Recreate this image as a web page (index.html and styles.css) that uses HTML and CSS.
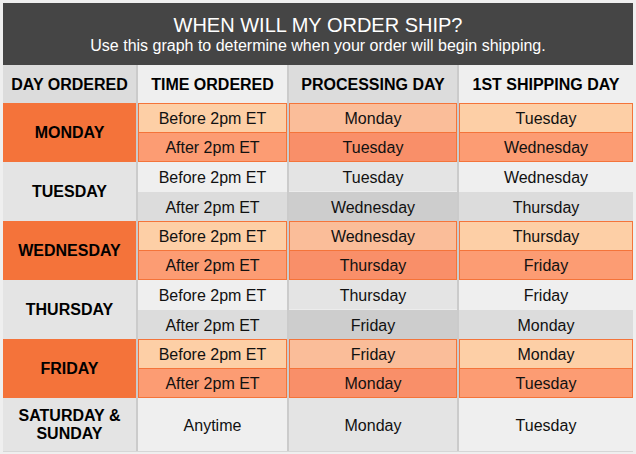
FILE: index.html
```html
<!DOCTYPE html>
<html lang="en">
<head>
<meta charset="utf-8">
<title>When will my order ship?</title>
<link rel="stylesheet" href="styles.css">
</head>
<body>
<div class="chart">
  <header class="banner">
    <h1 class="title">WHEN WILL MY ORDER SHIP?</h1>
    <p class="subtitle">Use this graph to determine when your order will begin shipping.</p>
  </header>
  <div class="grid">
    <div class="th th-dark">DAY ORDERED</div>
    <div class="th th-light">TIME ORDERED</div>
    <div class="th th-dark">PROCESSING DAY</div>
    <div class="th th-light">1ST SHIPPING DAY</div>

    <div class="day day-orange">MONDAY</div>
    <div class="cell o-before-a">Before 2pm ET</div>
    <div class="cell o-before-b">Monday</div>
    <div class="cell o-before-a">Tuesday</div>
    <div class="cell o-after-a after">After 2pm ET</div>
    <div class="cell o-after-b after">Tuesday</div>
    <div class="cell o-after-a after">Wednesday</div>

    <div class="day day-gray">TUESDAY</div>
    <div class="cell g-before-a">Before 2pm ET</div>
    <div class="cell g-before-b">Tuesday</div>
    <div class="cell g-before-a">Wednesday</div>
    <div class="cell g-after-a">After 2pm ET</div>
    <div class="cell g-after-b">Wednesday</div>
    <div class="cell g-after-a">Thursday</div>

    <div class="day day-orange">WEDNESDAY</div>
    <div class="cell o-before-a">Before 2pm ET</div>
    <div class="cell o-before-b">Wednesday</div>
    <div class="cell o-before-a">Thursday</div>
    <div class="cell o-after-a after">After 2pm ET</div>
    <div class="cell o-after-b after">Thursday</div>
    <div class="cell o-after-a after">Friday</div>

    <div class="day day-gray">THURSDAY</div>
    <div class="cell g-before-a">Before 2pm ET</div>
    <div class="cell g-before-b">Thursday</div>
    <div class="cell g-before-a">Friday</div>
    <div class="cell g-after-a">After 2pm ET</div>
    <div class="cell g-after-b">Friday</div>
    <div class="cell g-after-a">Monday</div>

    <div class="day day-orange">FRIDAY</div>
    <div class="cell o-before-a">Before 2pm ET</div>
    <div class="cell o-before-b">Friday</div>
    <div class="cell o-before-a">Monday</div>
    <div class="cell o-after-a after">After 2pm ET</div>
    <div class="cell o-after-b after">Monday</div>
    <div class="cell o-after-a after">Tuesday</div>

    <div class="day day-gray weekend">SATURDAY &amp;<br>SUNDAY</div>
    <div class="cell w-light">Anytime</div>
    <div class="cell w-dark">Monday</div>
    <div class="cell w-light">Tuesday</div>
  </div>
</div>
</body>
</html>
```
FILE: styles.css
```css
* { box-sizing: border-box; }

html, body {
  margin: 0;
  padding: 0;
}

body {
  background: #efefef;
  padding: 3px;
  font-family: "Liberation Sans", Arial, sans-serif;
  color: #111;
}

.chart {
  width: 630px;
}

.banner {
  background: #454545;
  height: 62px;
  color: #fff;
  text-align: center;
  padding-top: 11px;
}

.title {
  margin: 0;
  font-size: 20px;
  font-weight: normal;
  line-height: 23px;
}

.subtitle {
  margin: 0;
  font-size: 16px;
  line-height: 18px;
}

.grid {
  display: grid;
  grid-template-columns: 133px 149px 168px 174px;
  grid-template-rows: 38px repeat(5, 30px 29px) 53px;
  column-gap: 2px;
  background: #cbcbcb;
  border-bottom: 1px solid #d6d6d6;
}

.th {
  display: flex;
  align-items: center;
  justify-content: center;
  padding-top: 2px;
  font-weight: bold;
  font-size: 16px;
  color: #000;
}
.th-dark { background: #dcdcdc; }
.th-light { background: #efefef; }

.day {
  grid-column: 1;
  grid-row: span 2;
  display: flex;
  align-items: center;
  justify-content: center;
  text-align: center;
  padding-top: 1px;
  font-weight: bold;
  font-size: 16px;
  line-height: 18px;
  color: #000;
}
.day-orange { background: #f4733a; }
.day-gray { background: #e4e4e4; }
.weekend { grid-row: span 1; }

.cell {
  display: flex;
  align-items: center;
  justify-content: center;
  padding-top: 2px;
  font-size: 16px;
  color: #111;
}

.o-before-a, .o-before-b, .o-after-a, .o-after-b {
  border: 1px solid #f4743a;
}
.after { border-top: 0; }

.o-before-a { background: #fdcfa6; }
.o-before-b { background: #fabd99; }
.o-after-a { background: #fc9c73; }
.o-after-b { background: #f98f69; }

.g-before-a { background: #efefef; }
.g-before-b { background: #e4e4e4; border-bottom: 1px solid #ececec; }
.g-after-a { background: #dcdcdc; }
.g-after-b { background: #cdcdcd; }

.w-light { background: #efefef; }
.w-dark { background: #e4e4e4; }
```
